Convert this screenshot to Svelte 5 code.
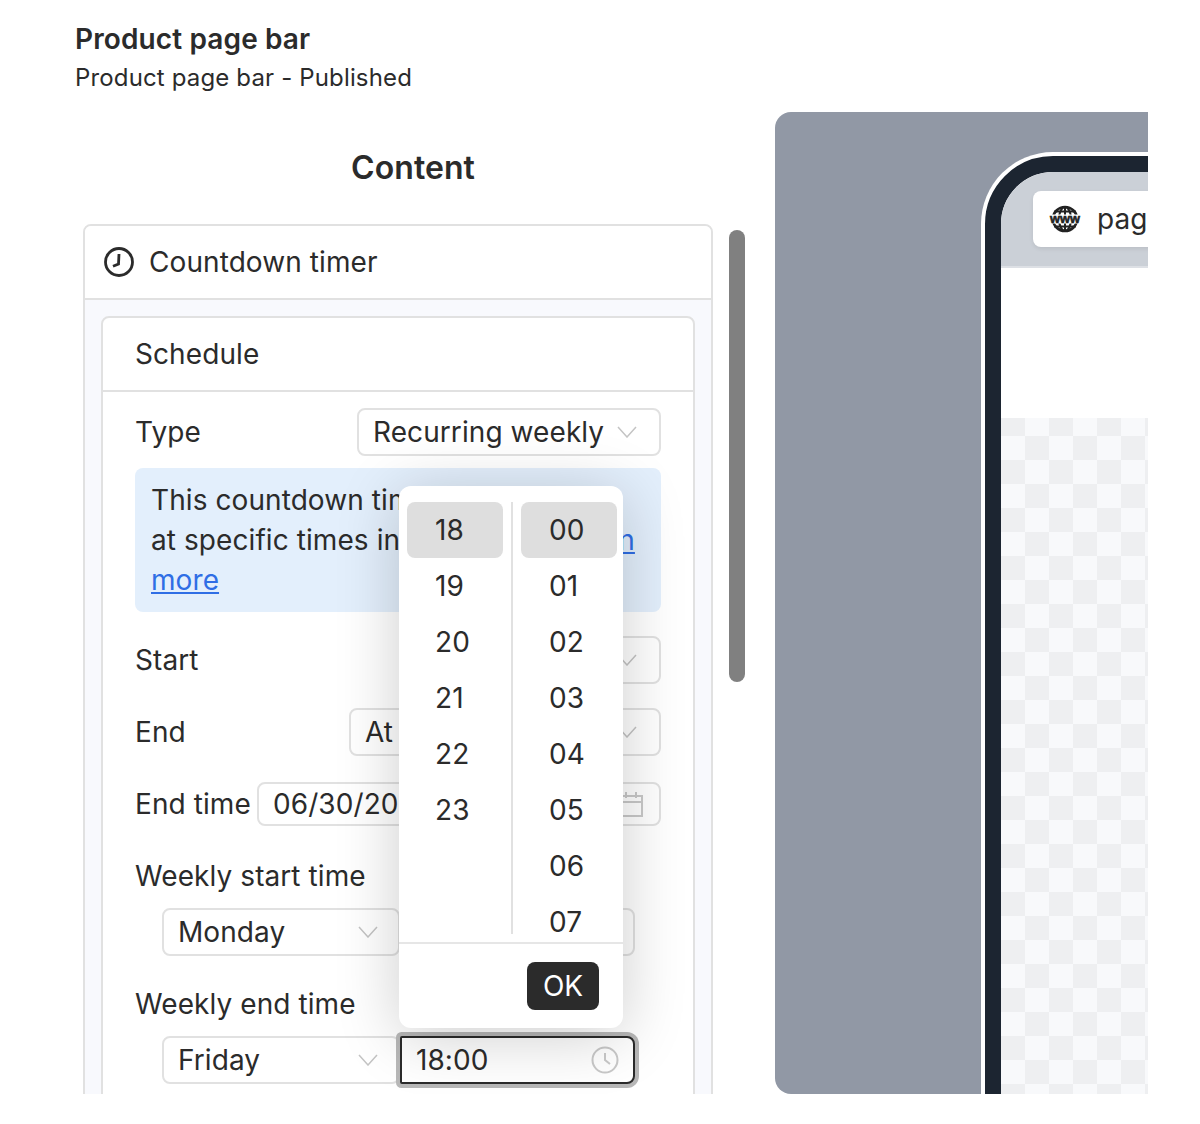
<script>
  const hours = ["18", "19", "20", "21", "22", "23"];
  const minutes = ["00", "01", "02", "03", "04", "05", "06", "07", "08"];
</script>

{#snippet chevron()}
  <svg class="chevron" viewBox="0 0 20 12" width="20" height="12" aria-hidden="true">
    <path d="M1 1l9 10 9-10" fill="none" stroke="#c4c4c4" stroke-width="1.5" />
  </svg>
{/snippet}

{#snippet clock()}
  <svg viewBox="0 0 28 28" width="28" height="28" aria-hidden="true">
    <circle cx="14" cy="14" r="12.5" fill="none" stroke="#c9c9c9" stroke-width="2" />
    <path d="M14 7v7l5 4" fill="none" stroke="#c9c9c9" stroke-width="2" />
  </svg>
{/snippet}

<div class="page">
  <header class="head">
    <h1>Product page bar</h1>
    <p>Product page bar - Published</p>
  </header>

  <main class="main">
    <section class="editor">
      <h2>Content</h2>
      <div class="editor-body">
        <div class="card">
          <div class="card-head">
            <svg viewBox="0 0 30 30" width="30" height="30" aria-hidden="true">
              <circle cx="15" cy="15" r="13.5" fill="none" stroke="#2b2b2b" stroke-width="2.8" />
              <path d="M15 7l-.5 10-5.500 2.200" fill="none" stroke="#2b2b2b" stroke-width="2.8" />
            </svg>
            <span>Countdown timer</span>
          </div>
          <div class="card-inner">
            <div class="panel">
              <div class="panel-head">Schedule</div>
              <div class="panel-body">
                <div class="row type-row">
                  <span>Type</span>
                  <div class="field type-field">Recurring weekly {@render chevron()}</div>
                </div>
                <div class="banner">
                  This countdown timer resets<br />
                  at specific times in your store. <a href="#top">Learn</a><br />
                  <a href="#top">more</a>
                </div>
                <div class="row start-row">
                  <span>Start</span>
                  <div class="field start-field">Now {@render chevron()}</div>
                </div>
                <div class="row end-row">
                  <span>End</span>
                  <div class="field end-field">At a specific date {@render chevron()}</div>
                </div>
                <div class="row date-row">
                  <span>End time</span>
                  <div class="field date-field">
                    06/30/2025
                    <svg viewBox="0 0 24 26" width="24" height="26" aria-hidden="true">
                      <path d="M1 5h22v20H1zM1 11h22M7 1v6M17 1v6" fill="none" stroke="#c9c9c9" stroke-width="2" />
                    </svg>
                  </div>
                </div>
                <div class="label start-label">Weekly start time</div>
                <div class="pair">
                  <div class="field day">Monday {@render chevron()}</div>
                  <div class="field time">09:00 {@render clock()}</div>
                </div>
                <div class="label end-label">Weekly end time</div>
                <div class="pair">
                  <div class="field day">Friday {@render chevron()}</div>
                  <div class="field time focused">18:00 {@render clock()}</div>
                </div>
              </div>
            </div>
          </div>
        </div>
        <div class="scrollbar"></div>

        <div class="picker">
          <div class="columns">
            <div class="col hours">
              {#each hours as h, i}
                <div class="cell" class:selected={i === 0}>{h}</div>
              {/each}
            </div>
            <div class="col mins">
              {#each minutes as m, i}
                <div class="cell" class:selected={i === 0}>{m}</div>
              {/each}
            </div>
          </div>
          <div class="picker-foot">
            <button type="button">OK</button>
          </div>
        </div>
      </div>
    </section>

    <section class="preview">
      <div class="phone">
        <div class="browser-bar">
          <div class="url">
            <svg viewBox="0 0 32 28" width="32" height="28" aria-hidden="true">
              <circle cx="16" cy="14" r="12" fill="none" stroke="#222" stroke-width="2.6" />
              <ellipse cx="16" cy="14" rx="6" ry="12" fill="none" stroke="#222" stroke-width="2" />
              <path d="M5 6.500h22M5 21.500h22M16 1v26" stroke="#222" stroke-width="2" />
              <rect x="0" y="9.500" width="32" height="9" fill="#fff" />
              <text x="1" y="18" textLength="30" lengthAdjust="spacingAndGlyphs" class="www">www</text>
            </svg>
            <span>page-preview</span>
          </div>
        </div>
        <div class="blank"></div>
        <div class="checker"></div>
      </div>
    </section>
  </main>
</div>

<style>
  :global(body) {
    margin: 0;
    background: #fff;
    font-family: Inter, "Liberation Sans", sans-serif;
    color: #2b2b2b;
  }

  .page {
    width: 1148px;
    height: 1094px;
    overflow: hidden;
    font-size: 28px;
    line-height: 40px;
    letter-spacing: 0.08px;
  }

  .head {
    padding: 21px 0 0 75px;
  }

  h1 {
    margin: 0;
    font-size: 28px;
    line-height: 36px;
    font-weight: 600;
    letter-spacing: 0.12px;
  }

  .head p {
    margin: 3px 0 0;
    font-size: 24px;
    line-height: 36px;
    letter-spacing: 0.15px;
  }

  .main {
    display: flex;
    margin-top: 16px;
    padding-left: 83px;
    height: 982px;
  }

  .editor {
    width: 662px;
    flex: none;
    margin-right: 30px;
    height: 982px;
    overflow: hidden;
  }

  h2 {
    margin: 0;
    padding-top: 36px;
    width: 660px;
    text-align: center;
    font-size: 32px;
    line-height: 40px;
    font-weight: 600;
  }

  .editor-body {
    position: relative;
    display: flex;
    align-items: flex-start;
    margin-top: 36px;
  }

  .card {
    width: 630px;
    height: 900px;
    flex: none;
    box-sizing: border-box;
    border: 2px solid #e1e1e1;
    border-radius: 8px;
    background: #f8f9fd;
  }

  .card-head {
    display: flex;
    align-items: center;
    gap: 15px;
    height: 72px;
    padding-left: 19px;
    background: #fff;
    border-bottom: 2px solid #e1e1e1;
    border-radius: 6px 6px 0 0;
  }

  .card-inner {
    padding: 16px;
  }

  .panel {
    box-sizing: border-box;
    height: 900px;
    border: 2px solid #e1e1e1;
    border-radius: 8px;
    background: #fff;
  }

  .panel-head {
    display: flex;
    align-items: center;
    height: 72px;
    padding-left: 32px;
    border-bottom: 2px solid #e1e1e1;
  }

  .panel-body {
    padding: 16px 32px;
  }

  .row {
    display: flex;
    align-items: center;
    justify-content: space-between;
  }

  .field {
    box-sizing: border-box;
    display: flex;
    align-items: center;
    justify-content: space-between;
    height: 48px;
    padding: 0 22px 0 14px;
    border: 2px solid #e1e1e1;
    border-radius: 8px;
    background: #fff;
    white-space: nowrap;
  }

  .chevron {
    flex: none;
  }

  .type-field {
    width: 304px;
  }

  .banner {
    margin-top: 12px;
    padding: 12px 16px;
    height: 144px;
    box-sizing: border-box;
    background: #e3effc;
    border-radius: 8px;
    white-space: nowrap;
    overflow: hidden;
  }

  .banner a {
    color: #2f6ee5;
  }

  .start-row {
    margin-top: 24px;
  }

  .start-field {
    width: 200px;
  }

  .end-row {
    margin-top: 24px;
  }

  .end-field {
    width: 312px;
  }

  .date-row {
    margin-top: 26px;
  }

  .date-field {
    width: 404px;
    height: 44px;
    padding-right: 16px;
  }

  .label {
    line-height: 40px;
  }

  .start-label {
    margin-top: 30px;
  }

  .end-label {
    margin-top: 28px;
  }

  .pair {
    display: flex;
    margin: 12px 0 0 27px;
  }

  .day {
    width: 238px;
    flex: none;
    padding: 0 20px 0 14px;
  }

  .time {
    width: 235px;
    flex: none;
    padding-right: 14px;
  }

  .focused {
    border-color: #2b2b2b;
    border-radius: 2px 8px 8px 2px;
    box-shadow: 0 0 0 4px #b8b8b8;
  }

  .scrollbar {
    width: 16px;
    height: 452px;
    flex: none;
    margin: 6px 0 0 16px;
    border-radius: 8px;
    background: #808080;
  }

  .picker {
    position: absolute;
    left: 316px;
    top: 262px;
    width: 224px;
    height: 542px;
    border-radius: 12px;
    background: #fff;
    box-shadow: 0 8px 64px rgba(0, 0, 0, 0.2);
    z-index: 2;
  }

  .columns {
    display: flex;
    height: 448px;
    padding: 16px 6px 0 8px;
    box-sizing: border-box;
    overflow: hidden;
  }

  .col {
    width: 96px;
    flex: none;
    height: 432px;
  }

  .mins {
    margin-left: 8px;
    padding-left: 8px;
    border-left: 2px solid #e1e1e1;
    overflow: hidden;
    height: 432px;
  }

  .cell {
    height: 56px;
    width: 96px;
    display: flex;
    align-items: center;
    padding-left: 28px;
    box-sizing: border-box;
    border-radius: 8px;
  }

  .selected {
    background: #dedede;
  }

  .picker-foot {
    display: flex;
    justify-content: flex-end;
    padding: 18px 24px 0 0;
    margin-top: 8px;
    border-top: 2px solid #e6e6e6;
  }

  .picker-foot button {
    width: 72px;
    height: 48px;
    border: none;
    border-radius: 8px;
    background: #2b2b2b;
    color: #fff;
    font: inherit;
    padding: 0;
  }

  .preview {
    flex: none;
    width: 500px;
    height: 982px;
    box-sizing: border-box;
    padding: 40px 0 0 206px;
    overflow: hidden;
    border-radius: 16px;
    background: #9198a5;
  }

  .phone {
    width: 600px;
    height: 1100px;
    box-sizing: border-box;
    border: 16px solid #1c2531;
    border-radius: 68px;
    box-shadow: 0 0 0 4px #fff;
    margin-left: 4px;
    margin-top: 4px;
    background: #fff;
    overflow: hidden;
  }

  .browser-bar {
    height: 96px;
    box-sizing: border-box;
    padding: 19px 0 0 32px;
    background: #cbd0d7;
    border-bottom: 2px solid #dde0e5;
  }

  .url {
    display: flex;
    align-items: center;
    gap: 16px;
    width: 520px;
    height: 56px;
    padding-left: 16px;
    box-sizing: border-box;
    border-radius: 8px;
    background: #fff;
    box-shadow: 0 2px 4px rgba(0, 0, 0, 0.08);
  }

  .www {
    font-size: 13px;
    font-weight: 800;
    fill: #222;
    stroke: #222;
    stroke-width: 0.6;
    font-family: "Liberation Sans", sans-serif;
  }

  .blank {
    height: 150px;
    background: #fff;
  }

  .checker {
    height: 800px;
    background-image: conic-gradient(#eeeff1 25%, #f8f9fb 0 50%, #eeeff1 0 75%, #f8f9fb 0);
    background-size: 48px 48px;
    background-position: -24px -6px;
  }
</style>
